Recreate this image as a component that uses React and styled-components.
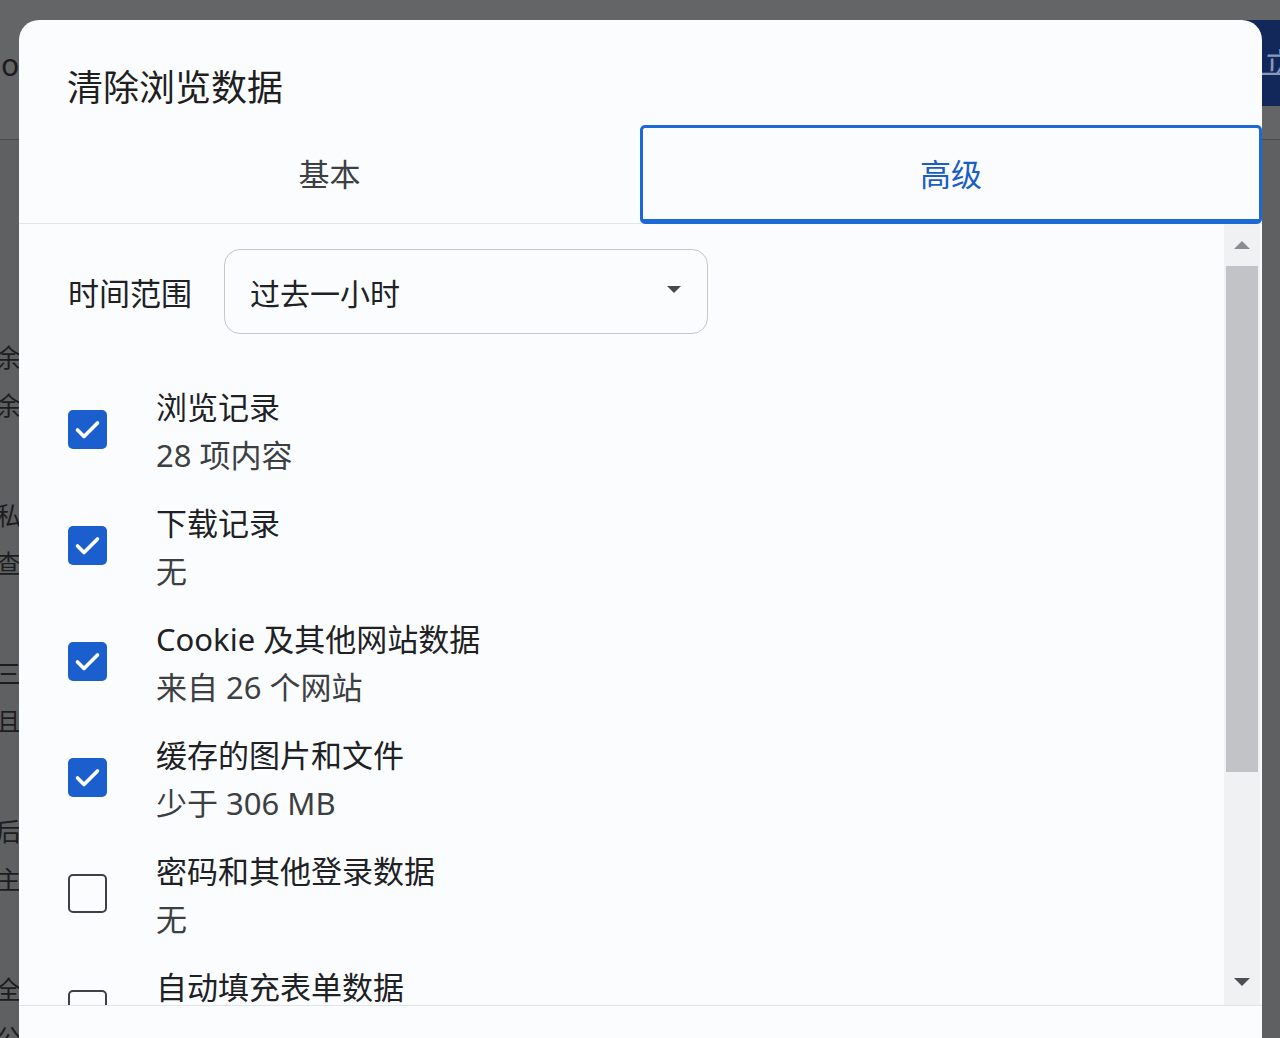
import React from 'react';
import styled, { createGlobalStyle } from 'styled-components';

const GlobalStyle = createGlobalStyle`
  html, body {
    margin: 0;
    padding: 0;
    height: 1038px;
    overflow: hidden;
  }
  body {
    background: #606163;
    font-family: "Noto Sans", "Noto Sans CJK SC", sans-serif;
  }
`;

const Page = styled.div`
  position: relative;
  width: 1280px;
  height: 1038px;
  overflow: hidden;
  background: #5f6062;
`;

/* the settings page behind the dimmed backdrop */
const Behind = styled.div`
  display: flex;
  flex-direction: column;
`;

const BehindHeader = styled.div`
  height: 139px;
  border-bottom: 1px solid #48494b;
  background: #646567;
  display: flex;
  justify-content: space-between;
  align-items: flex-start;
`;

const BehindLogo = styled.span`
  margin-top: 47px;
  margin-left: 1px;
  font-size: 30px;
  line-height: 36px;
  color: #1c1c1e;
`;

const BehindButton = styled.span`
  margin-top: 20px;
  margin-right: -50px;
  width: 100px;
  height: 86px;
  box-sizing: border-box;
  padding-left: 30px;
  background: #12285b;
  color: #8a98bb;
  font-size: 30px;
  line-height: 86px;
  font-style: italic;
`;

const BehindGap = styled.div`
  height: 169px;
`;

const BehindGroup = styled.div`
  height: 158px;
  box-sizing: border-box;
  padding-top: 24px;
  display: flex;
  flex-direction: column;
`;

const BehindLine = styled.span`
  margin-left: -4px;
  font-size: 25px;
  line-height: 48px;
  color: #1d1d1f;
  white-space: nowrap;
`;

/* dialog */
const Dialog = styled.div`
  position: absolute;
  left: 19px;
  top: 20px;
  width: 1243px;
  height: 1060px;
  background: #fbfcfe;
  border-radius: 20px;
  overflow: hidden;
  display: flex;
  flex-direction: column;
`;

const Title = styled.h1`
  margin: 0 0 13px 0;
  padding: 44px 0 0 48px;
  height: 48px;
  font-size: 36px;
  line-height: 48px;
  font-weight: 400;
  color: #1f1f22;
`;

const Tabs = styled.div`
  display: grid;
  grid-template-columns: 621px 1fr;
  height: 99px;
  box-sizing: border-box;
  border-bottom: 1px solid #e2e4e7;
`;

const Tab = styled.div`
  display: flex;
  align-items: center;
  justify-content: center;
  box-sizing: border-box;
  height: 99px;
  padding-bottom: 2px;
  font-size: 31px;
  color: ${(p) => (p.$active ? '#1a5dc6' : '#3c4043')};
  border: ${(p) => (p.$active ? '3px solid #1c68d6' : '3px solid transparent')};
  border-bottom-width: 5px;
  border-radius: 5px;
`;

const Body = styled.div`
  display: flex;
  height: 781px;
  border-bottom: 1px solid #e1e3e6;
`;

const Scroller = styled.div`
  flex: 1;
  overflow: hidden;
  padding: 25px 0 0 49px;
`;

const RangeRow = styled.div`
  display: flex;
  align-items: center;
  gap: 32px;
`;

const RangeLabel = styled.span`
  font-size: 31px;
  color: #202124;
`;

const Select = styled.div`
  width: 484px;
  height: 85px;
  box-sizing: border-box;
  border: 1px solid #c4c7cb;
  border-radius: 16px;
  display: flex;
  align-items: center;
  justify-content: space-between;
  padding: 0 26px 0 25px;
  font-size: 30px;
  color: #202124;
`;

const Caret = styled.span`
  width: 0;
  height: 0;
  margin-top: -4px;
  border-left: 7px solid transparent;
  border-right: 7px solid transparent;
  border-top: 7px solid #48494d;
`;

const List = styled.div`
  display: flex;
  flex-direction: column;
  gap: 20px;
  margin-top: 49px;
`;

const Item = styled.div`
  display: flex;
  align-items: center;
  gap: 49px;
`;

const Box = styled.span`
  flex: none;
  width: 39px;
  height: 39px;
  margin-top: -3px;
  box-sizing: border-box;
  border-radius: 5px;
  display: flex;
  align-items: center;
  justify-content: center;
  background: ${(p) => (p.$checked ? '#1b5fcf' : 'transparent')};
  border: ${(p) => (p.$checked ? 'none' : '2.5px solid #3d4044')};
`;

const Texts = styled.div`
  display: flex;
  flex-direction: column;
  font-size: 31px;
  line-height: 48px;
`;

const ItemTitle = styled.span`
  color: #202124;
`;

const ItemSub = styled.span`
  color: #3c4043;
`;

const ScrollTrack = styled.div`
  width: 36px;
  margin-right: 2px;
  background: #f0f1f3;
  display: flex;
  flex-direction: column;
  align-items: center;
`;

const ArrowCell = styled.div`
  height: ${(p) => p.$h}px;
  display: flex;
  align-items: center;
  justify-content: center;
`;

const Arrow = styled.span`
  width: 0;
  height: 0;
  border-left: 8px solid transparent;
  border-right: 8px solid transparent;
  ${(p) =>
    p.$up
      ? 'border-bottom: 8px solid #8b8c90;'
      : 'border-top: 8px solid #4d4e52;'}
`;

const Thumb = styled.div`
  width: 32px;
  height: 506px;
  background: #c2c3c6;
`;

const Spacer = styled.div`
  flex: 1;
`;

const Check = () => (
  <svg width="39" height="39" viewBox="0 0 39 39">
    <polyline
      points="9.5,20 16,26.5 29.5,13"
      fill="none"
      stroke="#fff"
      strokeWidth="3.6"
      strokeLinecap="round"
      strokeLinejoin="round"
    />
  </svg>
);

const items = [
  { title: '浏览记录', sub: '28 项内容', checked: true },
  { title: '下载记录', sub: '无', checked: true },
  { title: 'Cookie 及其他网站数据', sub: '来自 26 个网站', checked: true },
  { title: '缓存的图片和文件', sub: '少于 306 MB', checked: true },
  { title: '密码和其他登录数据', sub: '无', checked: false },
  { title: '自动填充表单数据', sub: '', checked: false },
];

const behindRows = [
  ['余额', '余额'],
  ['私密', '查看'],
  ['三方', '且不'],
  ['后台', '主页'],
  ['全部', '公开'],
];

const App = () => {
  return (
    <Page>
      <GlobalStyle />
      <Behind>
        <BehindHeader>
          <BehindLogo>o</BehindLogo>
          <BehindButton>立即</BehindButton>
        </BehindHeader>
        <BehindGap />
        {behindRows.map((row, i) => (
          <BehindGroup key={i}>
            <BehindLine>{row[0]}</BehindLine>
            <BehindLine>{row[1]}</BehindLine>
          </BehindGroup>
        ))}
      </Behind>

      <Dialog>
        <Title>清除浏览数据</Title>
        <Tabs>
          <Tab>基本</Tab>
          <Tab $active>高级</Tab>
        </Tabs>
        <Body>
          <Scroller>
            <RangeRow>
              <RangeLabel>时间范围</RangeLabel>
              <Select>
                <span>过去一小时</span>
                <Caret />
              </Select>
            </RangeRow>
            <List>
              {items.map((item, index) => (
                <Item key={index}>
                  <Box $checked={item.checked}>{item.checked && <Check />}</Box>
                  <Texts>
                    <ItemTitle>{item.title}</ItemTitle>
                    <ItemSub>{item.sub || '\u00a0'}</ItemSub>
                  </Texts>
                </Item>
              ))}
            </List>
          </Scroller>
          <ScrollTrack>
            <ArrowCell $h={42}>
              <Arrow $up />
            </ArrowCell>
            <Thumb />
            <Spacer />
            <ArrowCell $h={46}>
              <Arrow />
            </ArrowCell>
          </ScrollTrack>
        </Body>
      </Dialog>
    </Page>
  );
};

export default App;
